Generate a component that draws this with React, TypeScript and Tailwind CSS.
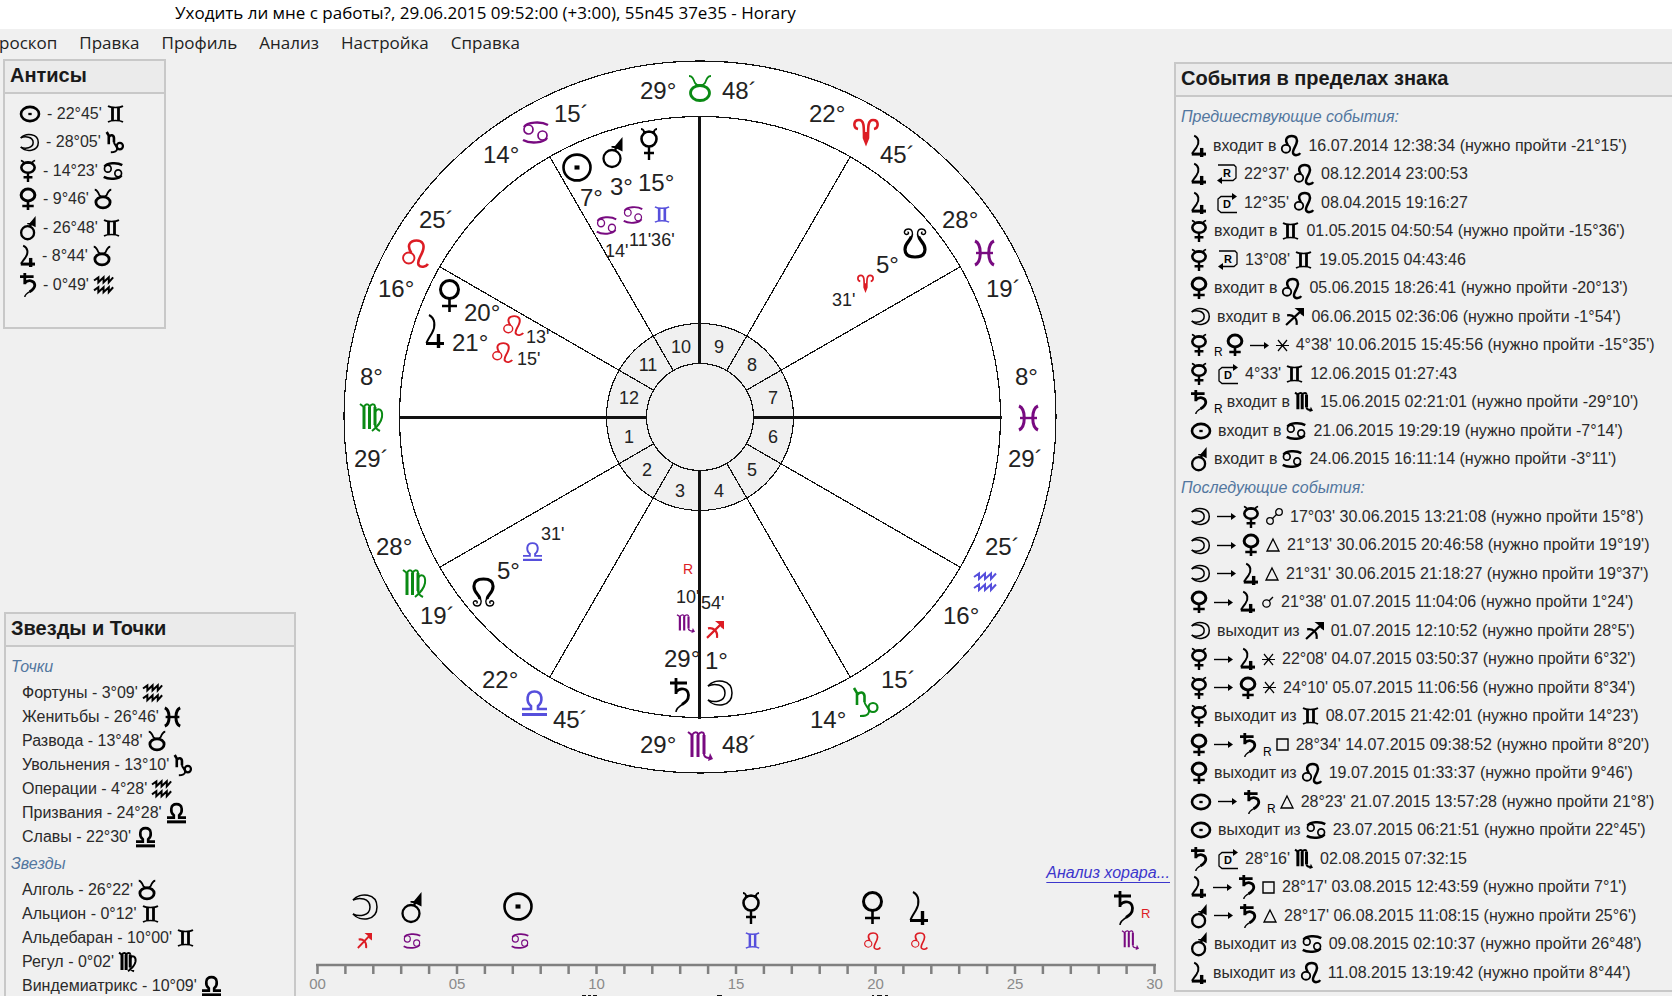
import React from 'react';

type Shape = { w: number; h: number; draw: React.ReactNode };

const nodeShape = (
    <>
        <path d="M8 23C9 19 2 17 2 9.5C2 4.500 6 2 12 2C18 2 22 4.500 22 9.500C22 17 15 19 16 23" strokeWidth="3.200" />
        <path d="M8.500 22C10.500 25 9.500 30 5.500 30C1 30 0 25 3.500 24.500C6 24.500 6 27 4.500 27" strokeWidth="1.400" />
        <path d="M15.500 22C13.500 25 14.500 30 18.500 30C23 30 24 25 20.500 24.500C18 24.500 18 27 19.500 27" strokeWidth="1.400" />
    </>
);

// Every shape is drawn in its own box and stretched to the size asked for
const shapes: Record<string, Shape> = {
    sun: {
        w: 30, h: 28,
        draw: <><ellipse cx="15" cy="14" rx="13.5" ry="12.5" strokeWidth="2.6" /><rect x="12.5" y="12" width="5" height="4" fill="currentColor" stroke="none" /></>,
    },
    moon: {
        w: 26, h: 26,
        draw: <><path d="M1 6C8 -2 25 -1 25 13C25 27 8 28 1 20" strokeWidth="1.5" /><path d="M1 6C7 3 18 4 18 13C18 22 7 23 1 20" strokeWidth="1.500" /></>,
    },
    mercury: {
        w: 18, h: 32,
        draw: <><path d="M1 1C2 1 4 2 4 4H14C14 2 16 1 17 1" strokeWidth="1.800" /><ellipse cx="9" cy="11" rx="7.500" ry="7.500" strokeWidth="2.600" /><path d="M9 18V32M4 25H14" strokeWidth="2.400" /></>,
    },
    venus: {
        w: 21, h: 33,
        draw: <><circle cx="10.5" cy="10.5" r="9" strokeWidth="3" /><path d="M10.500 19V33M3 27H18" strokeWidth="2.600" /></>,
    },
    mars: {
        w: 21, h: 31,
        draw: <><circle cx="10" cy="21.5" r="8.5" strokeWidth="2.300" /><path d="M13 13L16 8" strokeWidth="2.400" /><path d="M20.500 0V14.500L15.500 12L9.500 10.500V9H13Z" fill="currentColor" stroke="none" /></>,
    },
    jupiter: {
        w: 19, h: 34,
        draw: <><path d="M4 1C10 4 11 12 7 19C4 24 2 27 1.500 29" strokeWidth="2" /><path d="M1 29.500H19" strokeWidth="3" /><path d="M13.500 20V34" strokeWidth="3.400" /></>,
    },
    saturn: {
        w: 20, h: 34,
        draw: <><path d="M0 5H17M6 0V16" strokeWidth="2.800" /><path d="M6 14C10 9 18 10 18.500 17C18.500 22 16 24 12 26.500" strokeWidth="2.800" /><path d="M13 26C8 29 6 31 6 34" strokeWidth="1.500" /></>,
    },
    northNode: { w: 24, h: 31, draw: nodeShape },
    southNode: { w: 24, h: 31, draw: <g transform="matrix(1 0 0 -1 0 31)">{nodeShape}</g> },
    aries: {
        w: 26, h: 27,
        draw: <path d="M5 11C0 10 0 2 6 2C11 2 11 8 11 20L13 25L15 20C15 8 15 2 20 2C26 2 26 10 21 11M13 14V25" strokeWidth="2.600" />,
    },
    taurus: {
        w: 24, h: 27,
        draw: <><ellipse cx="12" cy="18" rx="9.5" ry="7.500" strokeWidth="2.800" /><path d="M1 1C4 1 5 3 7 8C9 11 15 11 17 8C19 3 20 1 23 1" strokeWidth="1.800" /></>,
    },
    gemini: {
        w: 17, h: 18,
        draw: <><path d="M1 1C4 3 13 3 16 1M1 17C4 15 13 15 16 17" strokeWidth="1.600" /><path d="M5.500 2V16M11.500 2V16" strokeWidth="2.800" /></>,
    },
    cancer: {
        w: 27, h: 23,
        draw: <><path d="M2 6C5 1 19 0 26 4" strokeWidth="2.400" /><path d="M1 19C8 23 22 22 25 17" strokeWidth="2.400" /><circle cx="6.500" cy="8.500" r="4.500" strokeWidth="1.700" /><circle cx="20.500" cy="14.500" r="4.500" strokeWidth="1.700" /></>,
    },
    leo: {
        w: 26, h: 29,
        draw: <><circle cx="6.500" cy="19" r="5.500" strokeWidth="1.800" /><path d="M9 14C4 6 8 1.500 14 1.500C20 1.500 22 6 20 12C18 18 14 22 16 26C18 29 23 28 25 25" strokeWidth="2.500" /></>,
    },
    virgo: {
        w: 24, h: 29,
        draw: <><path d="M4 4V26M9.500 4V26M15 4V22" strokeWidth="3" /><path d="M0 1L4 4C6 0 9 1 9.500 4C12 0 15 1 15 4M15 22C15 25 18 27 20 28M15 9C18 4 23 6 22 14C21 20 17 24 12 28" strokeWidth="2" /></>,
    },
    libra: {
        w: 25, h: 26,
        draw: <><path d="M0 19H9V16C4 12 4 1.500 12.500 1.500C21 1.500 21 12 16 16V19H25" strokeWidth="2.600" /><path d="M0 24.500H25" strokeWidth="3" /></>,
    },
    scorpio: {
        w: 25, h: 30,
        draw: <><path d="M4 4V26M10 4V26M16 4V23" strokeWidth="3" /><path d="M0 1L4 4C7 0 10 1 10 4C13 0 16 1 16 4M16 23C16 26 18 27 22 27" strokeWidth="2" /><path d="M22 22L25 28L20 30Z" fill="currentColor" stroke="none" /></>,
    },
    sagittarius: {
        w: 18, h: 17,
        draw: <><path d="M1 16L15 3M2 7C7 6 12 9 11 16" strokeWidth="2.200" /><path d="M9 0H18V8L15 6L13 3Z" fill="currentColor" stroke="none" /></>,
    },
    capricorn: {
        w: 26, h: 29,
        draw: <><path d="M1 0L4 5V17M4 7C7 3 11 4 11.500 8V14" strokeWidth="2.600" /><path d="M11.500 14C12 18 17 20 16 24C15 28 11 28 7 28" strokeWidth="2" /><ellipse cx="20" cy="19.500" rx="4.500" ry="4.500" strokeWidth="2.200" /></>,
    },
    aquarius: {
        w: 23, h: 20,
        draw: <path d="M0 5L5 1.500V7L11 1.500V7L17 1.500V7L22 1.500M0 16L5 12.500V18L11 12.500V18L17 12.500V18L22 12.500" strokeWidth="2" />,
    },
    pisces: {
        w: 21, h: 26,
        draw: <><path d="M1 1C8 4 8 22 1 25M20 1C13 4 13 22 20 25" strokeWidth="3" /><path d="M2 13H19" strokeWidth="2.400" /></>,
    },
    arrow: {
        w: 19, h: 9,
        draw: <><path d="M0 4.500H15" strokeWidth="1.400" /><path d="M14 1L19 4.500L14 8Z" fill="currentColor" stroke="none" /></>,
    },
    opposition: {
        w: 17, h: 17,
        draw: <><circle cx="4" cy="13" r="3.300" strokeWidth="1.300" /><circle cx="13" cy="4" r="3.300" strokeWidth="1.300" /><path d="M6 11L11 6" strokeWidth="1.300" /></>,
    },
    conjunction: {
        w: 12, h: 12,
        draw: <><circle cx="4.500" cy="7.500" r="3.700" strokeWidth="1.300" /><path d="M7 5L11 1" strokeWidth="1.300" /></>,
    },
    sextile: {
        w: 13, h: 13,
        draw: <path d="M0 6.500H13M2 1L11 12M11 1L2 12" strokeWidth="1.200" />,
    },
    square: { w: 13, h: 13, draw: <path d="M1 1H12V12H1Z" strokeWidth="1.400" /> },
    trine: { w: 14, h: 14, draw: <path d="M7 1L13 13H1Z" strokeWidth="1.300" /> },
    turnRetro: {
        w: 20, h: 20,
        draw: <><path d="M1 1H17L19 3V14L16 16.500H4" strokeWidth="1.300" /><path d="M0 16.500L5 13V20Z" fill="currentColor" stroke="none" /></>,
    },
    turnDirect: {
        w: 20, h: 20,
        draw: <><path d="M20 19.500H4L1 17V6L4 3.500H16" strokeWidth="1.300" /><path d="M20 3.500L15 0V7Z" fill="currentColor" stroke="none" /></>,
    },
};

// Sizes used in the side panels
const panelSize: Record<string, string> = {
    sun: 'w-5 h-4',
    moon: 'w-[19px] h-[17px]',
    mercury: 'w-4 h-[22px]',
    venus: 'w-4 h-[22px]',
    mars: 'w-4 h-6',
    jupiter: 'w-[15px] h-[22px]',
    saturn: 'w-4 h-6',
    taurus: 'w-[18px] h-5',
    gemini: 'w-[17px] h-[18px]',
    cancer: 'w-5 h-[18px]',
    leo: 'w-5 h-[21px]',
    virgo: 'w-[18px] h-5',
    libra: 'w-[19px] h-5',
    scorpio: 'w-[18px] h-5',
    sagittarius: 'w-[19px] h-[18px]',
    capricorn: 'w-[18px] h-[21px]',
    aquarius: 'w-5 h-[18px]',
    pisces: 'w-[17px] h-5',
    arrow: 'w-[19px] h-[9px]',
    opposition: 'w-[17px] h-[17px]',
    conjunction: 'w-3 h-3',
    sextile: 'w-[13px] h-[13px]',
    square: 'w-[13px] h-[13px]',
    trine: 'w-[14px] h-[14px]',
};

const Glyph: React.FC<{ name: string }> = ({ name }) => {
    const s = shapes[name];
    return (
        <svg
            viewBox={`0 0 ${s.w} ${s.h}`}
            preserveAspectRatio="none"
            fill="none"
            stroke="currentColor"
            className={`shrink-0 text-black overflow-visible mr-[7px] [&_*]:[vector-effect:non-scaling-stroke] ${panelSize[name]}`}
        >
            {s.draw}
        </svg>
    );
};

const TurnGlyph: React.FC<{ name: string; letter: string }> = ({ name, letter }) => (
    <svg viewBox="0 0 20 20" fill="none" stroke="currentColor" className="shrink-0 w-5 h-5 ml-1 mr-[7px] text-black overflow-visible">
        {shapes[name].draw}
        <text x="10" y={letter === 'R' ? 13 : 15} textAnchor="middle" fontSize="11" fontWeight="bold" fill="currentColor" stroke="none">
            {letter}
        </text>
    </svg>
);

const Tokens: React.FC<{ items: string[] }> = ({ items }) => (
    <li className="flex items-center whitespace-nowrap">
        {items.map((t, i) => {
            if (t === 'R>') return <TurnGlyph key={i} name="turnRetro" letter="R" />;
            if (t === 'D>') return <TurnGlyph key={i} name="turnDirect" letter="D" />;
            if (t === 'R') return <sub key={i} className="text-xs leading-3 mr-1 pt-2 text-black">R</sub>;
            if (shapes[t]) return <Glyph key={i} name={t} />;
            return <span key={i} className="mr-[5px]">{t}</span>;
        })}
    </li>
);

const antiscia = [
    ['sun', "- 22°45'", 'gemini'],
    ['moon', "- 28°05'", 'capricorn'],
    ['mercury', "- 14°23'", 'cancer'],
    ['venus', "- 9°46'", 'taurus'],
    ['mars', "- 26°48'", 'gemini'],
    ['jupiter', "- 8°44'", 'taurus'],
    ['saturn', "- 0°49'", 'aquarius'],
];

const lots = [
    ["Фортуны - 3°09'", 'aquarius'],
    ["Женитьбы - 26°46'", 'pisces'],
    ["Развода - 13°48'", 'taurus'],
    ["Увольнения - 13°10'", 'capricorn'],
    ["Операции - 4°28'", 'aquarius'],
    ["Призвания - 24°28'", 'libra'],
    ["Славы - 22°30'", 'libra'],
];

const stars = [
    ["Алголь - 26°22'", 'taurus'],
    ["Альцион - 0°12'", 'gemini'],
    ["Альдебаран - 10°00'", 'gemini'],
    ["Регул - 0°02'", 'virgo'],
    ["Виндемиатрикс - 10°09'", 'libra'],
];

const pastEvents = [
    ['jupiter', 'входит в', 'leo', "16.07.2014 12:38:34 (нужно пройти -21°15')"],
    ['jupiter', 'R>', "22°37'", 'leo', '08.12.2014 23:00:53'],
    ['jupiter', 'D>', "12°35'", 'leo', '08.04.2015 19:16:27'],
    ['mercury', 'входит в', 'gemini', "01.05.2015 04:50:54 (нужно пройти -15°36')"],
    ['mercury', 'R>', "13°08'", 'gemini', '19.05.2015 04:43:46'],
    ['venus', 'входит в', 'leo', "05.06.2015 18:26:41 (нужно пройти -20°13')"],
    ['moon', 'входит в', 'sagittarius', "06.06.2015 02:36:06 (нужно пройти -1°54')"],
    ['mercury', 'R', 'venus', 'arrow', 'sextile', "4°38' 10.06.2015 15:45:56 (нужно пройти -15°35')"],
    ['mercury', 'D>', "4°33'", 'gemini', '12.06.2015 01:27:43'],
    ['saturn', 'R', 'входит в', 'scorpio', "15.06.2015 02:21:01 (нужно пройти -29°10')"],
    ['sun', 'входит в', 'cancer', "21.06.2015 19:29:19 (нужно пройти -7°14')"],
    ['mars', 'входит в', 'cancer', "24.06.2015 16:11:14 (нужно пройти -3°11')"],
];

const nextEvents = [
    ['moon', 'arrow', 'mercury', 'opposition', "17°03' 30.06.2015 13:21:08 (нужно пройти 15°8')"],
    ['moon', 'arrow', 'venus', 'trine', "21°13' 30.06.2015 20:46:58 (нужно пройти 19°19')"],
    ['moon', 'arrow', 'jupiter', 'trine', "21°31' 30.06.2015 21:18:27 (нужно пройти 19°37')"],
    ['venus', 'arrow', 'jupiter', 'conjunction', "21°38' 01.07.2015 11:04:06 (нужно пройти 1°24')"],
    ['moon', 'выходит из', 'sagittarius', "01.07.2015 12:10:52 (нужно пройти 28°5')"],
    ['mercury', 'arrow', 'jupiter', 'sextile', "22°08' 04.07.2015 03:50:37 (нужно пройти 6°32')"],
    ['mercury', 'arrow', 'venus', 'sextile', "24°10' 05.07.2015 11:06:56 (нужно пройти 8°34')"],
    ['mercury', 'выходит из', 'gemini', "08.07.2015 21:42:01 (нужно пройти 14°23')"],
    ['venus', 'arrow', 'saturn', 'R', 'square', "28°34' 14.07.2015 09:38:52 (нужно пройти 8°20')"],
    ['venus', 'выходит из', 'leo', "19.07.2015 01:33:37 (нужно пройти 9°46')"],
    ['sun', 'arrow', 'saturn', 'R', 'trine', "28°23' 21.07.2015 13:57:28 (нужно пройти 21°8')"],
    ['sun', 'выходит из', 'cancer', "23.07.2015 06:21:51 (нужно пройти 22°45')"],
    ['saturn', 'D>', "28°16'", 'scorpio', '02.08.2015 07:32:15'],
    ['jupiter', 'arrow', 'saturn', 'square', "28°17' 03.08.2015 12:43:59 (нужно пройти 7°1')"],
    ['mars', 'arrow', 'saturn', 'trine', "28°17' 06.08.2015 11:08:15 (нужно пройти 25°6')"],
    ['mars', 'выходит из', 'cancer', "09.08.2015 02:10:37 (нужно пройти 26°48')"],
    ['jupiter', 'выходит из', 'leo', "11.08.2015 13:19:42 (нужно пройти 8°44')"],
];

const RED = '#dc1c24';
const GREEN = '#0a8a14';
const BLUE = '#564fdc';
const PURPLE = '#780a80';
const BLACK = '#000000';

type Mark = [string, number, number, number, number, string];

const wheelMarks: Mark[] = [
    ['taurus', 688, 75, 24, 27, GREEN],
    ['cancer', 522, 121, 27, 23, PURPLE],
    ['leo', 402, 239, 27, 29, RED],
    ['virgo', 360, 403, 24, 29, GREEN],
    ['virgo', 403, 569, 24, 29, GREEN],
    ['libra', 522, 690, 25, 26, BLUE],
    ['scorpio', 688, 731, 25, 30, PURPLE],
    ['capricorn', 853, 688, 26, 29, GREEN],
    ['aquarius', 974, 572, 23, 20, BLUE],
    ['pisces', 1018, 405, 21, 26, PURPLE],
    ['pisces', 974, 240, 21, 26, PURPLE],
    ['aries', 853, 118, 26, 27, RED],
    ['sun', 562, 153, 30, 29, BLACK],
    ['mars', 602, 137, 21, 31, BLACK],
    ['mercury', 640, 128, 18, 32, BLACK],
    ['cancer', 596, 216, 21, 19, PURPLE],
    ['cancer', 623, 206, 20, 18, PURPLE],
    ['gemini', 654, 206, 16, 17, BLUE],
    ['venus', 439, 279, 21, 33, BLACK],
    ['jupiter', 425, 314, 19, 34, BLACK],
    ['leo', 503, 315, 21, 21, RED],
    ['leo', 492, 342, 21, 21, RED],
    ['southNode', 903, 228, 24, 31, BLACK],
    ['aries', 857, 274, 17, 18, RED],
    ['northNode', 472, 577, 23, 30, BLACK],
    ['libra', 523, 542, 19, 19, BLUE],
    ['scorpio', 677, 614, 18, 19, PURPLE],
    ['saturn', 670, 678, 20, 34, BLACK],
    ['sagittarius', 706, 621, 18, 18, RED],
    ['moon', 707, 680, 26, 26, BLACK],
];

const bigLabels: [string, number, number][] = [
    ['29°', 640, 99], ['48´', 722, 99],
    ['15´', 554, 122], ['14°', 483, 163],
    ['25´', 419, 228], ['16°', 378, 297],
    ['8°', 360, 385], ['29´', 354, 467],
    ['28°', 376, 555], ['19´', 420, 624],
    ['22°', 482, 688], ['45´', 553, 728],
    ['29°', 640, 753], ['48´', 722, 753],
    ['14°', 810, 728], ['15´', 881, 688],
    ['16°', 943, 624], ['25´', 985, 555],
    ['29´', 1008, 467], ['8°', 1015, 385],
    ['19´', 986, 297], ['28°', 942, 228],
    ['45´', 880, 163], ['22°', 809, 122],
    ['7°', 580, 206], ['3°', 610, 195], ['15°', 638, 191],
    ['20°', 464, 321], ['21°', 452, 351],
    ['5°', 876, 273], ['5°', 497, 579],
    ['29°', 664, 667], ['1°', 705, 669],
];

const smallLabels: [string, number, number][] = [
    ["14'", 605, 257], ["11'36'", 629, 246],
    ["13'", 526, 343], ["15'", 517, 365],
    ["31'", 832, 306], ["31'", 541, 540],
    ["10'", 676, 603], ["54'", 701, 609],
];

const houses: [number, number, number][] = [
    [1, 629, 443], [2, 647, 476], [3, 680, 497],
    [4, 719, 497], [5, 752, 476], [6, 773, 443],
    [7, 773, 404], [8, 752, 371], [9, 719, 353],
    [10, 681, 353], [11, 648, 371], [12, 629, 404],
];

const rulerMarks: Mark[] = [
    ['moon', 352, 894, 26, 26, BLACK],
    ['mars', 401, 892, 21, 31, BLACK],
    ['sun', 503, 892, 30, 29, BLACK],
    ['mercury', 742, 892, 18, 32, BLACK],
    ['venus', 862, 891, 21, 33, BLACK],
    ['jupiter', 909, 891, 19, 34, BLACK],
    ['saturn', 1114, 891, 20, 34, BLACK],
    ['sagittarius', 357, 933, 15, 16, RED],
    ['cancer', 403, 933, 18, 16, PURPLE],
    ['cancer', 511, 933, 18, 16, PURPLE],
    ['gemini', 745, 932, 15, 17, BLUE],
    ['leo', 864, 932, 17, 18, RED],
    ['leo', 911, 932, 17, 18, RED],
    ['scorpio', 1122, 930, 17, 20, PURPLE],
];

const Placed: React.FC<{ mark: Mark }> = ({ mark: [name, x, y, w, h, color] }) => {
    const s = shapes[name];
    return (
        <svg x={x} y={y} width={w} height={h} viewBox={`0 0 ${s.w} ${s.h}`} preserveAspectRatio="none" fill="none" stroke="currentColor" color={color} overflow="visible">
            {s.draw}
        </svg>
    );
};

const CX = 700;
const CY = 417;

const Wheel: React.FC = () => (
    <svg viewBox="340 59 720 718" className="block w-full max-w-[720px]">
        <g stroke="#111" strokeWidth="1.2" shapeRendering="crispEdges">
            <circle cx={CX} cy={CY} r="356" fill="#fff" />
            <circle cx={CX} cy={CY} r="300.5" fill="#fff" />
            <circle cx={CX} cy={CY} r="93.5" fill="#f0f0f0" />
            <circle cx={CX} cy={CY} r="53.5" fill="#f0f0f0" />
            {[30, 60, 120, 150, 210, 240, 300, 330].map((deg) => {
                const a = (deg * Math.PI) / 180;
                return (
                    <line
                        key={deg}
                        x1={CX + 53 * Math.cos(a)}
                        y1={CY + 53 * Math.sin(a)}
                        x2={CX + 301 * Math.cos(a)}
                        y2={CY + 301 * Math.sin(a)}
                    />
                );
            })}
            <path d="M399 417.500H647M753 417.500H1002M699.500 116V364M699.500 471V719" strokeWidth="3" />
        </g>
        <g fill="#222" fontSize="24">
            {bigLabels.map(([t, x, y], i) => <text key={i} x={x} y={y}>{t}</text>)}
        </g>
        <g fill="#222" fontSize="18">
            {smallLabels.map(([t, x, y], i) => <text key={i} x={x} y={y}>{t}</text>)}
            {houses.map(([n, x, y]) => <text key={n} x={x} y={y} textAnchor="middle">{n}</text>)}
        </g>
        <text x="683" y="574" fontSize="14" fill={RED}>R</text>
        {wheelMarks.map((m, i) => <Placed key={i} mark={m} />)}
    </svg>
);

const Ruler: React.FC = () => (
    <svg viewBox="296 885 878 111" className="block w-full">
        {rulerMarks.map((m, i) => <Placed key={i} mark={m} />)}
        <text x="1141" y="918" fontSize="13" fill={RED}>R</text>
        <g stroke="#808080" strokeWidth="2.500">
            <path d="M316 965H1156" />
            {Array.from({ length: 31 }, (_, i) => (
                <line key={i} x1={317.5 + i * 27.9} x2={317.5 + i * 27.9} y1="965" y2="974" />
            ))}
        </g>
        <g fill="#8a8a8a" fontSize="15" textAnchor="middle">
            {['00', '05', '10', '15', '20', '25', '30'].map((t, i) => (
                <text key={t} x={317.5 + i * 139.5} y="989">{t}</text>
            ))}
        </g>
        <path d="M582 995.500H586M588 995.500H591M593 995.500H597M717 995.500H722M872 995.500H874M877 995.500H882M885 995.500H888" stroke="#111" strokeWidth="1" />
    </svg>
);

const PanelTitle: React.FC<{ children: React.ReactNode }> = ({ children }) => (
    <h2 className="h-[33px] shrink-0 border-b-2 border-[#c8c8c8] bg-[#ebebeb] pl-[5px] text-xl leading-7 font-bold text-[#1a1a1a] whitespace-nowrap">
        {children}
    </h2>
);

const GroupTitle: React.FC<{ children: React.ReactNode }> = ({ children }) => (
    <h3 className="pl-[5px] leading-[29px] italic text-[#53779f]">{children}</h3>
);

const menu = ['роскоп', 'Правка', 'Профиль', 'Анализ', 'Настройка', 'Справка'];

export default function App() {
    return (
        <div className="flex flex-col h-screen overflow-hidden bg-[#f0f0f0] font-['Liberation_Sans',Arial,sans-serif] text-base text-[#2a2a2a]">
            <header className="shrink-0 bg-white pl-[175px] h-[29px] font-['Open_Sans',sans-serif] text-[17px] leading-[25px] text-black whitespace-nowrap">
                Уходить ли мне с работы?, 29.06.2015 09:52:00 (+3:00), 55n45 37e35 - Horary
            </header>
            <nav className="flex shrink-0 gap-[22px] -ml-px h-[30px] pb-[3px] font-['Open_Sans',sans-serif] text-[17px] leading-[27px] text-[#222]">
                {menu.map((m) => (
                    <button key={m} type="button">{m}</button>
                ))}
            </nav>

            <main className="flex flex-1 min-h-0">
                <aside className="flex flex-col shrink-0 w-[296px] pl-[3px]">
                    <section className="w-[163px] h-[270px] border-2 border-[#c8c8c8]">
                        <PanelTitle>Антисы</PanelTitle>
                        <ul className="grid auto-rows-[29px_28px] pt-[5px] pl-[15px]">
                            {antiscia.map((row, i) => <Tokens key={i} items={row} />)}
                        </ul>
                    </section>
                    <section className="mt-auto ml-px h-[384px] overflow-hidden border-2 border-b-0 border-[#c8c8c8]">
                        <PanelTitle>Звезды и Точки</PanelTitle>
                        <div className="pt-[5px]">
                            <GroupTitle>Точки</GroupTitle>
                            <ul className="grid auto-rows-[24px] pl-4">
                                {lots.map((row, i) => <Tokens key={i} items={row} />)}
                            </ul>
                            <GroupTitle>Звезды</GroupTitle>
                            <ul className="grid auto-rows-[24px] pl-4">
                                {stars.map((row, i) => <Tokens key={i} items={row} />)}
                            </ul>
                        </div>
                    </section>
                </aside>

                <div className="flex flex-col flex-1 min-w-0">
                    <div className="pl-11">
                        <Wheel />
                    </div>
                    <a href="#analysis" className="mt-auto self-end pr-1 leading-6 italic text-[#3c36cc] underline underline-offset-4">
                        Анализ хорара...
                    </a>
                    <Ruler />
                </div>

                <aside className="flex flex-col shrink-0 w-[498px] pt-[3px] pb-1">
                    <section className="flex-1 min-h-0 overflow-hidden border-2 border-r-0 border-[#c8c8c8]">
                        <PanelTitle>События в пределах знака</PanelTitle>
                        <div className="pt-[5px]">
                            <GroupTitle>Предшествующие события:</GroupTitle>
                            <ul className="grid auto-rows-[29px_28px] pl-[15px]">
                                {pastEvents.map((row, i) => <Tokens key={i} items={row} />)}
                            </ul>
                            <GroupTitle>Последующие события:</GroupTitle>
                            <ul className="grid auto-rows-[29px_28px] pl-[15px]">
                                {nextEvents.map((row, i) => <Tokens key={i} items={row} />)}
                            </ul>
                        </div>
                    </section>
                </aside>
            </main>
        </div>
    );
}
